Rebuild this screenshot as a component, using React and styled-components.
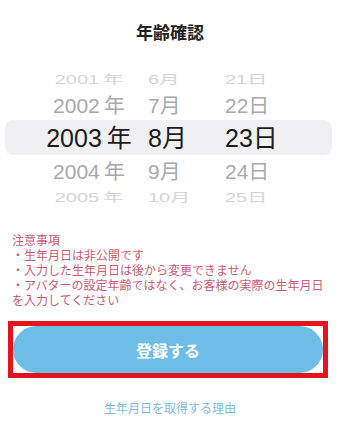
import React from "react";
import styled, { createGlobalStyle } from "styled-components";

const Global = createGlobalStyle`
  html, body { margin: 0; padding: 0; background: #fff; }
  body { font-family: "Noto Sans CJK JP", "Noto Sans", sans-serif; }
`;

const Page = styled.div`
  width: 340px;
  height: 437px;
  background: #fff;
  display: flex;
  flex-direction: column;
  overflow: hidden;
`;

const Title = styled.h1`
  margin: 20px 0 0;
  height: 24px;
  line-height: 24px;
  text-align: center;
  font-size: 17px;
  font-weight: 700;
  color: #222;
  font-family: "Noto Sans CJK JP", sans-serif;
`;

const Picker = styled.div`
  margin: 24px 8px 0 5px;
  display: flex;
  flex-direction: column;
`;

const variants = {
  far: { size: 20, color: "#d4d4d6", scale: 0.6 },
  near: { size: 21, color: "#a9a9ab", scale: 0.95 },
  selected: { size: 25, color: "#1c1c1e", scale: 1 },
};

const Row = styled.div`
  height: ${(p) => p.$h}px;
  display: grid;
  grid-template-columns: 98px 67px auto;
  column-gap: 10px;
  align-items: center;
  padding-left: 35px;
  border-radius: 8px;
  background: ${(p) => (p.$kind === "selected" ? "#f0f0f2" : "transparent")};
  font-family: "Liberation Sans", "Noto Sans CJK JP", sans-serif;
  font-size: ${(p) => variants[p.$kind].size}px;
  color: ${(p) => variants[p.$kind].color};
  white-space: nowrap;
`;

const Cell = styled.div`
  text-align: ${(p) => (p.$center ? "center" : "left")};
  line-height: 1;
  transform: scaleY(${(p) => variants[p.$kind].scale});
`;

const Unit = styled.span`
  margin-left: ${(p) => (p.$gap ? "0.2em" : "0")};
  font-family: "Noto Sans CJK JP", sans-serif;
`;

const Notes = styled.div`
  margin: 25px 0 0 12px;
  width: 316px;
  font-size: 12px;
  line-height: 15px;
  color: #cc5a75;
  font-family: "Noto Sans CJK JP", sans-serif;
`;

const Frame = styled.div`
  margin: 14px 0 0 8px;
  width: 310px;
  border: 5px solid #e3141f;
  display: flex;
`;

const Button = styled.button`
  flex: 1;
  height: 47px;
  border: none;
  border-radius: 24px;
  background: #6dbde6;
  color: #fff;
  font-size: 16px;
  font-weight: 700;
  font-family: "Noto Sans CJK JP", sans-serif;
  padding: 0;
  cursor: pointer;
`;

const Reason = styled.a`
  margin-top: 21px;
  height: 18px;
  line-height: 18px;
  text-align: center;
  font-size: 12px;
  color: #7dbbdc;
  font-family: "Noto Sans CJK JP", sans-serif;
  text-decoration: none;
`;

const rows = [
  { y: 2001, m: 6, d: 21, kind: "far", h: 22 },
  { y: 2002, m: 7, d: 22, kind: "near", h: 30 },
  { y: 2003, m: 8, d: 23, kind: "selected", h: 35 },
  { y: 2004, m: 9, d: 24, kind: "near", h: 32 },
  { y: 2005, m: 10, d: 25, kind: "far", h: 20 },
];

export default function App() {
  return (
    <Page>
      <Global />
      <Title>年齢確認</Title>
      <Picker>
        {rows.map((r) => (
          <Row key={r.y} $kind={r.kind} $h={r.h}>
            <Cell $kind={r.kind} $center>
              {r.y}
              <Unit $gap>年</Unit>
            </Cell>
            <Cell $kind={r.kind}>
              {r.m}
              <Unit>月</Unit>
            </Cell>
            <Cell $kind={r.kind}>
              {r.d}
              <Unit>日</Unit>
            </Cell>
          </Row>
        ))}
      </Picker>
      <Notes>
        注意事項
        <br />
        ・生年月日は非公開です
        <br />
        ・入力した生年月日は後から変更できません
        <br />
        ・アバターの設定年齢ではなく、お客様の実際の生年月日を入力してください
      </Notes>
      <Frame>
        <Button>登録する</Button>
      </Frame>
      <Reason href="#">生年月日を取得する理由</Reason>
    </Page>
  );
}
